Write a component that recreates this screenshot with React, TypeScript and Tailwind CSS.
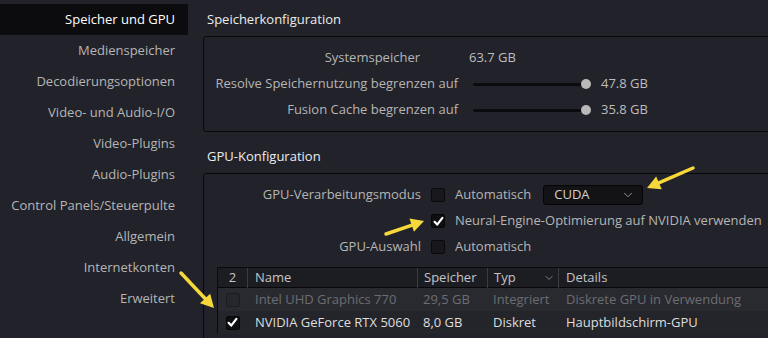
import { ChevronDown } from 'lucide-react'

const NAV = [
  'Speicher und GPU',
  'Medienspeicher',
  'Decodierungsoptionen',
  'Video- und Audio-I/O',
  'Video-Plugins',
  'Audio-Plugins',
  'Control Panels/Steuerpulte',
  'Allgemein',
  'Internetkonten',
  'Erweitert',
]

function Check({ checked, dim }: { checked?: boolean; dim?: boolean }) {
  return (
    <div
      className={`w-[14px] h-[14px] shrink-0 rounded-[2px] border flex items-center justify-center ${
        dim ? 'bg-[#26272d] border-[#1b1c20]' : checked ? 'bg-[#0e0e10] border-[#050505]' : 'bg-[#18181c] border-[#0a0a0c]'
      }`}
    >
      {checked && (
        <svg width="11" height="11" viewBox="0 0 11 11">
          <path d="M1.6 5.8 L4.2 8.6 L9.4 1.8" fill="none" stroke="#fff" strokeWidth="2.2" strokeLinecap="round" strokeLinejoin="round" />
        </svg>
      )}
    </div>
  )
}

function Slider({ value }: { value: string }) {
  return (
    <>
      <div className="ml-[15px] w-[118px] h-[10px] flex items-center">
        <div className="flex-1 h-[3px] bg-[#0b0b0d] rounded-full" />
        <div className="w-[10px] h-[10px] rounded-full bg-[#b9b9b9] -ml-[1px]" />
      </div>
      <span className="ml-[10px] text-[#bdbdbd]">{value}</span>
    </>
  )
}

// yellow annotation arrow, tip at (x2, y2)
function Arrow({ x1, y1, x2, y2 }: { x1: number; y1: number; x2: number; y2: number }) {
  const dx = x2 - x1
  const dy = y2 - y1
  const len = Math.hypot(dx, dy)
  const ux = dx / len
  const uy = dy / len
  const hl = 13
  const hw = 7
  const bx = x2 - ux * hl
  const by = y2 - uy * hl
  const pts = `${x2},${y2} ${bx - uy * hw},${by + ux * hw} ${bx + uy * hw},${by - ux * hw}`
  return (
    <g>
      <line x1={x1} y1={y1} x2={bx + ux * 2} y2={by + uy * 2} stroke="#f6d83a" strokeWidth="3.5" strokeLinecap="round" />
      <polygon points={pts} fill="#f6d83a" />
    </g>
  )
}

export default function App() {
  return (
    <div className="relative w-[768px] h-[338px] overflow-hidden bg-[#22232a] flex text-[13px] text-[#b5b5b5] font-['Open_Sans',sans-serif]">
      {/* Sidebar */}
      <aside className="w-[188px] shrink-0 pt-[4px]">
        {NAV.map((item, i) => (
          <div
            key={item}
            className={`h-[31px] flex items-center justify-end pr-[13px] ${i === 0 ? 'bg-[#0c0c0e] text-white' : ''}`}
          >
            {item}
          </div>
        ))}
      </aside>

      {/* Main */}
      <main className="flex-1 pl-[15px] -mr-[30px]">
        <div className="h-[36px] pt-[4px] pl-[4px] flex items-center text-[#ececec]">Speicherkonfiguration</div>
        <section className="border border-[#08080a] rounded-[3px] pt-[8px] pb-[8px]">
          <div className="h-[26px] flex items-center">
            <span className="w-[216px] text-right">Systemspeicher</span>
            <span className="ml-[49px] text-[#bdbdbd]">63.7 GB</span>
          </div>
          <div className="h-[26px] flex items-center">
            <span className="w-[254px] text-right">Resolve Speichernutzung begrenzen auf</span>
            <Slider value="47.8 GB" />
          </div>
          <div className="h-[26px] flex items-center">
            <span className="w-[254px] text-right">Fusion Cache begrenzen auf</span>
            <Slider value="35.8 GB" />
          </div>
        </section>

        <div className="mt-[9px] h-[32px] pl-[4px] flex items-center text-[#ececec]">GPU-Konfiguration</div>
        <section className="border border-[#08080a] rounded-[3px] pt-[8px] h-[200px]">
          <div className="h-[26px] flex items-center">
            <span className="w-[217px] text-right">GPU-Verarbeitungsmodus</span>
            <span className="ml-[10px]"><Check /></span>
            <span className="ml-[10px]">Automatisch</span>
            <div className="ml-[12px] w-[100px] h-[20px] bg-[#131316] border border-[#050506] rounded-[3px] flex items-center pl-[10px] pr-[7px] text-[#d2d2d2]">
              <span className="flex-1">CUDA</span>
              <ChevronDown className="w-[14px] h-[14px] text-[#9a9a9a]" strokeWidth={1.6} />
            </div>
          </div>
          <div className="h-[26px] flex items-center">
            <span className="w-[217px]" />
            <span className="ml-[10px]"><Check checked /></span>
            <span className="ml-[10px] whitespace-nowrap">Neural-Engine-Optimierung auf NVIDIA verwenden</span>
          </div>
          <div className="h-[26px] flex items-center">
            <span className="w-[217px] text-right">GPU-Auswahl</span>
            <span className="ml-[10px]"><Check /></span>
            <span className="ml-[10px]">Automatisch</span>
          </div>

          {/* GPU table */}
          <div className="mt-[7px] ml-[13px] border-l border-t border-[#0a0a0c]">
            <div className="h-[20px] flex items-center bg-[#1c1d23] border-b border-[#08080a] text-[#c4c4c4]">
              <div className="w-[29px] text-center">2</div>
              <div className="w-px h-[20px] bg-[#3b3c43]" />
              <div className="w-[169px] pl-[7px]">Name</div>
              <div className="w-px h-[20px] bg-[#3b3c43]" />
              <div className="w-[69px] pl-[6px]">Speicher</div>
              <div className="w-px h-[20px] bg-[#3b3c43]" />
              <div className="w-[70px] pl-[6px] pr-[3px] flex items-center">
                <span className="flex-1">Typ</span>
                <ChevronDown className="w-[12px] h-[12px] text-[#9a9a9a]" strokeWidth={1.6} />
              </div>
              <div className="w-px h-[20px] bg-[#3b3c43]" />
              <div className="pl-[7px]">Details</div>
            </div>
            <div className="h-[23px] flex items-center bg-[#292a30] text-[#6c6d71] whitespace-nowrap">
              <div className="w-[29px] flex justify-center"><Check dim /></div>
              <div className="w-[170px] pl-[8px]">Intel UHD Graphics 770</div>
              <div className="w-[70px] pl-[6px]">29,5 GB</div>
              <div className="w-[71px] pl-[6px]">Integriert</div>
              <div className="pl-[8px]">Diskrete GPU in Verwendung</div>
            </div>
            <div className="h-[23px] flex items-center bg-[#24252b] text-[#dedede] whitespace-nowrap">
              <div className="w-[29px] flex justify-center"><Check checked /></div>
              <div className="w-[170px] pl-[8px]">NVIDIA GeForce RTX 5060</div>
              <div className="w-[70px] pl-[6px]">8,0 GB</div>
              <div className="w-[71px] pl-[6px]">Diskret</div>
              <div className="pl-[8px]">Hauptbildschirm-GPU</div>
            </div>
          </div>
        </section>
      </main>

      {/* annotation arrows */}
      <svg className="absolute inset-0 pointer-events-none" width="768" height="338">
        <Arrow x1={693} y1={168} x2={647} y2={188} />
        <Arrow x1={386} y1={234} x2={424} y2={221} />
        <Arrow x1={181} y1={273} x2={214} y2={308} />
      </svg>
    </div>
  )
}
